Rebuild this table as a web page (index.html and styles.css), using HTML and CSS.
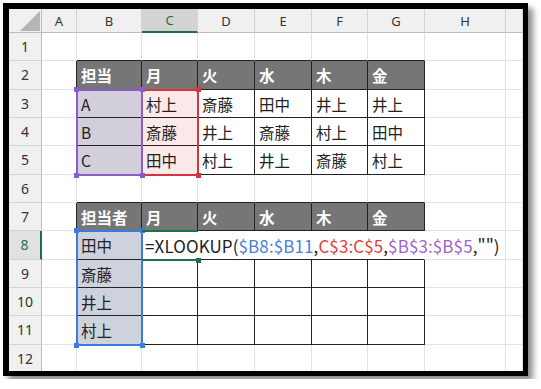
FILE: index.html
```html
<!DOCTYPE html>
<html lang="ja">
<head>
<meta charset="utf-8">
<title>XLOOKUP</title>
<link rel="stylesheet" href="styles.css">
</head>
<body>
<div class="frame">
  <div class="sheet">
    <div class="corner"><span class="tri"></span></div>
    <div class="ch">A</div>
    <div class="ch">B</div>
    <div class="ch sel">C</div>
    <div class="ch">D</div>
    <div class="ch">E</div>
    <div class="ch">F</div>
    <div class="ch">G</div>
    <div class="ch">H</div>
    <div class="ch"></div>

    <div class="rh">1</div>
    <div class="c"></div>
    <div class="c bb"></div><div class="c bb"></div><div class="c bb"></div><div class="c bb"></div><div class="c bb"></div><div class="c bb"></div>
    <div class="c"></div><div class="c"></div>

    <div class="rh">2</div>
    <div class="c br"></div>
    <div class="c hd">担当</div><div class="c hd">月</div><div class="c hd">火</div><div class="c hd">水</div><div class="c hd">木</div><div class="c hd">金</div>
    <div class="c"></div><div class="c"></div>

    <div class="rh">3</div>
    <div class="c br"></div>
    <div class="c t pu">A</div><div class="c t pk">村上</div><div class="c t">斎藤</div><div class="c t">田中</div><div class="c t">井上</div><div class="c t">井上</div>
    <div class="c"></div><div class="c"></div>

    <div class="rh">4</div>
    <div class="c br"></div>
    <div class="c t pu">B</div><div class="c t pk">斎藤</div><div class="c t">井上</div><div class="c t">斎藤</div><div class="c t">村上</div><div class="c t">田中</div>
    <div class="c"></div><div class="c"></div>

    <div class="rh">5</div>
    <div class="c br"></div>
    <div class="c t pu">C</div><div class="c t pk">田中</div><div class="c t">村上</div><div class="c t">井上</div><div class="c t">斎藤</div><div class="c t">村上</div>
    <div class="c"></div><div class="c"></div>

    <div class="rh">6</div>
    <div class="c"></div>
    <div class="c bb"></div><div class="c bb"></div><div class="c bb"></div><div class="c bb"></div><div class="c bb"></div><div class="c bb"></div>
    <div class="c"></div><div class="c"></div>

    <div class="rh">7</div>
    <div class="c br"></div>
    <div class="c hd">担当者</div><div class="c hd">月</div><div class="c hd">火</div><div class="c hd">水</div><div class="c hd">木</div><div class="c hd">金</div>
    <div class="c"></div><div class="c"></div>

    <div class="rh sel">8</div>
    <div class="c br"></div>
    <div class="c t bl">田中</div>
    <div class="c edit"><span class="formula">=XLOOKUP(<span class="r1">$B8:$B11</span>,<span class="r2">C$3:C$5</span>,<span class="r3">$B$3:$B$5</span>,"")</span></div>
    <div class="c"></div><div class="c"></div>

    <div class="rh">9</div>
    <div class="c br"></div>
    <div class="c t bl">斎藤</div><div class="c t"></div><div class="c t"></div><div class="c t"></div><div class="c t"></div><div class="c t"></div>
    <div class="c"></div><div class="c"></div>

    <div class="rh">10</div>
    <div class="c br"></div>
    <div class="c t bl">井上</div><div class="c t"></div><div class="c t"></div><div class="c t"></div><div class="c t"></div><div class="c t"></div>
    <div class="c"></div><div class="c"></div>

    <div class="rh">11</div>
    <div class="c br"></div>
    <div class="c t bl">村上</div><div class="c t"></div><div class="c t"></div><div class="c t"></div><div class="c t"></div><div class="c t"></div>
    <div class="c"></div><div class="c"></div>

    <div class="rh">12</div>
    <div class="c"></div>
    <div class="c"></div><div class="c"></div><div class="c"></div><div class="c"></div><div class="c"></div><div class="c"></div>
    <div class="c"></div><div class="c"></div>

    <div class="overlay">
      <div class="range red"><i class="h tr"></i><i class="h brc"></i></div>
      <div class="range purple"><i class="h tl"></i><i class="h tr"></i><i class="h bl"></i><i class="h brc"></i></div>
      <div class="range blue"><i class="h tl"></i><i class="h tr"></i><i class="h bl"></i><i class="h brc"></i></div>
      <div class="active"><i class="fill"></i></div>
    </div>
  </div>
</div>
</body>
</html>
```

FILE: styles.css
```css
* { box-sizing: border-box; margin: 0; padding: 0; }
html, body { background: #fff; }
body {
  font-family: "Noto Sans CJK JP", "Noto Sans", sans-serif;
  color: #222;
}
.frame {
  margin: 3px;
  width: 525px;
  height: 373px;
  border-style: solid;
  border-color: #000;
  border-width: 6px 5px 5px 6px;
  box-shadow: 5px 5px 6px rgba(0, 0, 0, 0.45);
  overflow: hidden;
  background: #fff;
}
.sheet, .overlay {
  display: grid;
  grid-template-columns: 33px 35px 65px 56px 57px 57px 56px 57px 81px 17px;
  grid-template-rows: 24px repeat(12, 28.333px);
}
.sheet { position: relative; }
.overlay {
  position: absolute;
  left: 0;
  top: 0;
  pointer-events: none;
}
.corner {
  background: #f0f0f0;
  border-right: 1px solid #bdbdbd;
  border-bottom: 1px solid #bdbdbd;
  display: flex;
  justify-content: flex-end;
  align-items: flex-end;
  padding: 0 1px 1px 0;
}
.tri {
  width: 0;
  height: 0;
  border-left: 20px solid transparent;
  border-bottom: 20px solid #b5b5b5;
}
.ch {
  background: #f0f0f0;
  border-right: 1px solid #d4d4d4;
  border-bottom: 1px solid #bdbdbd;
  display: flex;
  align-items: center;
  justify-content: center;
  font-family: "Noto Sans", sans-serif;
  font-size: 13px;
  color: #333;
}
.ch.sel {
  background: #d3d3d3;
  border-bottom: 2px solid #1e7145;
  color: #1e7145;
}
.rh {
  background: #f0f0f0;
  border-right: 1px solid #bdbdbd;
  border-bottom: 1px solid #d4d4d4;
  display: flex;
  align-items: center;
  justify-content: center;
  font-family: "Noto Sans", sans-serif;
  font-size: 14px;
  color: #333;
}
.rh.sel {
  background: #e1e1e1;
  border-right: 2px solid #1e7145;
  color: #1e7145;
}
.c {
  border-right: 1px solid #e2e2e2;
  border-bottom: 1px solid #e2e2e2;
  display: flex;
  align-items: center;
  padding: 1px 0 0 4px;
  font-size: 15.5px;
  white-space: nowrap;
}
.br { border-right-color: #222; }
.bb { border-bottom-color: #222; }
.t { border-right-color: #222; border-bottom-color: #222; }
.hd {
  background: #767676;
  color: #fff;
  font-weight: bold;
  border-right-color: #222;
  border-bottom-color: #222;
}
.pu { background: #d2cfdb; }
.pk { background: #fbe8e9; }
.bl { background: #cdd2dc; }
.edit {
  grid-column: span 5;
  border-right-color: transparent;
  border-bottom-color: #222;
  overflow: visible;
  padding-left: 3px;
}
.formula { font-size: 17px; letter-spacing: 0.1px; color: #222; }
.r1 { color: #4a80dc; }
.r2 { color: #e0413b; }
.r3 { color: #a163cf; }

.range {
  position: relative;
  border: 2px solid;
  margin: -1px;
}
.range.purple { grid-column: 3 / 4; grid-row: 4 / 7; border-color: #8c5cc8; }
.range.red { grid-column: 4 / 5; grid-row: 4 / 7; border-color: #d2353d; }
.range.blue { grid-column: 3 / 4; grid-row: 9 / 13; border-color: #3a7bdc; }
.h {
  position: absolute;
  width: 5px;
  height: 5px;
}
.purple .h { background: #8c5cc8; }
.red .h { background: #d2353d; }
.blue .h { background: #3a7bdc; }
.h.tl { left: -4px; top: -4px; }
.h.tr { right: -4px; top: -4px; }
.h.bl { left: -4px; bottom: -4px; }
.h.brc { right: -4px; bottom: -4px; }
.active {
  grid-column: 4 / 5;
  grid-row: 9 / 10;
  position: relative;
  border-top: 2px solid #1e7145;
  border-bottom: 2px solid #1e7145;
  margin: -1px 0;
}
.fill {
  position: absolute;
  right: -3px;
  bottom: -4px;
  width: 5px;
  height: 5px;
  background: #1e7145;
}
```
